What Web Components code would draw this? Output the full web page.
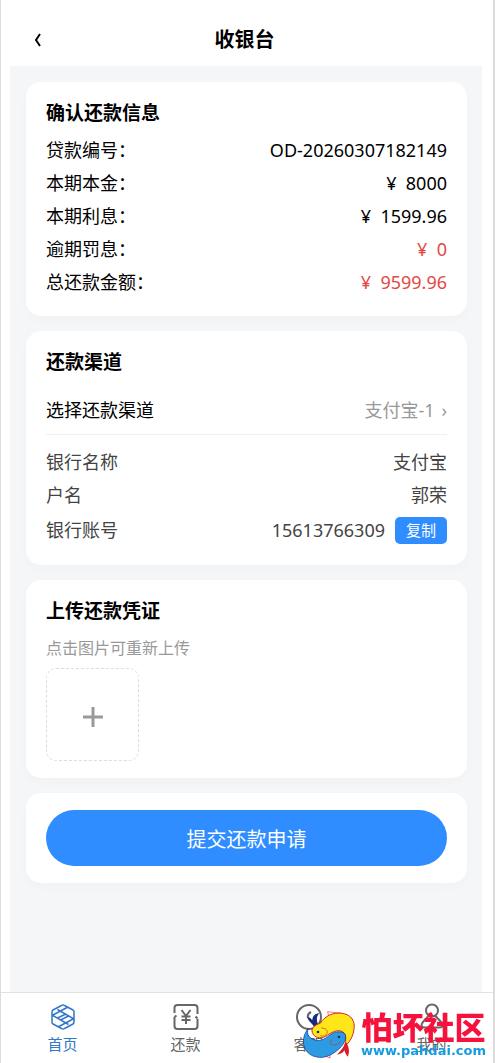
<!DOCTYPE html>
<html lang="zh-CN">
<head>
<meta charset="utf-8">
<meta name="viewport" content="width=device-width, initial-scale=1">
<title>收银台</title>
<style>
  body {
    margin: 0;
    background: #fff;
    color: #000;
    font: 18px/1.5 "Noto Sans", "Noto Sans CJK SC", sans-serif;
    --primary: #2f8dff;
    --danger: #e04a42;
    --muted: #999;
  }
</style>
</head>
<body>
<cashier-page>
  <page-header slot="header">收银台</page-header>

  <info-card heading="确认还款信息">
    <info-row label="贷款编号：">OD-20260307182149</info-row>
    <info-row label="本期本金：">¥&nbsp; 8000</info-row>
    <info-row label="本期利息：">¥&nbsp; 1599.96</info-row>
    <info-row label="逾期罚息：" danger>¥&nbsp; 0</info-row>
    <info-row label="总还款金额：" danger>¥&nbsp; 9599.96</info-row>
  </info-card>

  <info-card heading="还款渠道">
    <channel-picker label="选择还款渠道" value="支付宝-1"></channel-picker>
    <info-row label="银行名称" soft>支付宝</info-row>
    <info-row label="户名" soft>郭荣</info-row>
    <info-row label="银行账号" soft action>15613766309<copy-button slot="action" value="15613766309">复制</copy-button></info-row>
  </info-card>

  <info-card heading="上传还款凭证">
    <upload-box hint="点击图片可重新上传"></upload-box>
  </info-card>

  <info-card>
    <submit-button>提交还款申请</submit-button>
  </info-card>

  <tab-bar slot="footer">
    <tab-item icon="home" active>首页</tab-item>
    <tab-item icon="repay">还款</tab-item>
    <tab-item icon="service">客服</tab-item>
    <tab-item icon="mine">我的</tab-item>
  </tab-bar>
  <site-mark slot="mark"></site-mark>
</cashier-page>

<script>
class BaseElement extends HTMLElement {
  constructor() {
    super();
    this.attachShadow({ mode: 'open' });
  }

  connectedCallback() {
    this.shadowRoot.innerHTML = this.render();
  }
}

class CashierPage extends BaseElement {
  render() {
    return `
      <style>
        :host {
          display: flex;
          flex-direction: column;
          box-sizing: border-box;
          min-height: 100vh;
          border-left: 1px solid #dcdcde;
          border-right: 2px solid #dcdcde;
        }
        main {
          flex: 1;
          display: flex;
          flex-direction: column;
          gap: 15px;
          margin: 0 11px 0 9px;
          padding: 16px 15px 16px 16px;
          background: #f5f6f8;
        }
      </style>
      <slot name="header"></slot>
      <main><slot></slot></main>
      <slot name="footer"></slot>
      <slot name="mark"></slot>
    `;
  }
}

class PageHeader extends BaseElement {
  render() {
    return `
      <style>
        :host { display: block; }
        header {
          display: grid;
          grid-template-columns: 48px 1fr 48px;
          align-items: center;
          padding: 14px 18px 0 13px;
          height: 52px;
        }
        button {
          width: 48px;
          height: 48px;
          border: 0;
          padding: 0;
          background: none;
          display: grid;
          place-items: center;
        }
        h1 {
          margin: 0;
          font-size: 20px;
          line-height: 28px;
          font-weight: 700;
          text-align: center;
        }
      </style>
      <header>
        <button type="button" aria-label="返回">
          <svg width="8" height="14" viewBox="0 0 8 14" fill="none" stroke="#000" stroke-width="2"><path d="M6 1 2 7l4 6"/></svg>
        </button>
        <h1><slot></slot></h1>
      </header>
    `;
  }
}

class InfoCard extends BaseElement {
  render() {
    const heading = this.getAttribute('heading');
    return `
      <style>
        :host {
          display: block;
          padding: 17px 20px;
          border-radius: 15px;
          background: #fff;
          box-shadow: 0 4px 12px rgba(0, 0, 0, 0.02);
        }
        h2 {
          margin: 0 0 7px;
          font-size: 19px;
          line-height: 28px;
          font-weight: 700;
        }
      </style>
      ${heading ? `<h2>${heading}</h2>` : ''}
      <slot></slot>
    `;
  }
}

class InfoRow extends BaseElement {
  render() {
    return `
      <style>
        :host {
          display: flex;
          align-items: center;
          justify-content: space-between;
          min-height: 33px;
          line-height: 27px;
        }
        :host([soft]) { color: #444; }
        :host([action]) { min-height: 36px; }
        :host([danger]) .value { color: var(--danger); }
        .value {
          display: flex;
          align-items: center;
          gap: 10px;
        }
      </style>
      <span>${this.getAttribute('label')}</span>
      <span class="value"><span><slot></slot></span><slot name="action"></slot></span>
    `;
  }
}

class ChannelPicker extends BaseElement {
  render() {
    return `
      <style>
        :host {
          display: flex;
          align-items: center;
          justify-content: space-between;
          height: 48px;
          margin: 10px 0 11px;
          border-bottom: 1px solid #f0f0f0;
        }
        .field {
          display: flex;
          align-items: center;
          gap: 6px;
          color: var(--muted);
        }
        select {
          appearance: none;
          border: 0;
          padding: 0;
          background: none;
          color: inherit;
          font: inherit;
        }
      </style>
      <label for="channel">${this.getAttribute('label')}</label>
      <span class="field">
        <select id="channel"><option>${this.getAttribute('value')}</option></select>
        <span aria-hidden="true">›</span>
      </span>
    `;
  }
}

class CopyButton extends BaseElement {
  connectedCallback() {
    super.connectedCallback();
    this.shadowRoot.querySelector('button').addEventListener('click', () => {
      navigator.clipboard?.writeText(this.getAttribute('value'));
    });
  }

  render() {
    return `
      <style>
        :host { display: flex; }
        button {
          border: 0;
          border-radius: 5px;
          padding: 0 11px;
          background: var(--primary);
          color: #fff;
          font: inherit;
          font-size: 15px;
          line-height: 27px;
        }
      </style>
      <button type="button"><slot></slot></button>
    `;
  }
}

class UploadBox extends BaseElement {
  render() {
    return `
      <style>
        :host { display: block; }
        p {
          margin: 0 0 4px;
          color: var(--muted);
          font-size: 16px;
          line-height: 32px;
        }
        label {
          display: grid;
          place-items: center;
          box-sizing: border-box;
          width: 93px;
          height: 93px;
          padding-top: 4px;
          border: 1px dashed #ddd;
          border-radius: 10px;
        }
        input {
          position: absolute;
          width: 1px;
          height: 1px;
          opacity: 0;
        }
      </style>
      <p id="hint">${this.getAttribute('hint')}</p>
      <label for="file">
        <svg width="22" height="22" viewBox="0 0 22 22" stroke="#999" stroke-width="3" aria-hidden="true"><path d="M1 11h20M11 1v20"/></svg>
        <input id="file" type="file" accept="image/*" aria-labelledby="hint">
      </label>
    `;
  }
}

class SubmitButton extends BaseElement {
  render() {
    return `
      <style>
        :host { display: block; }
        button {
          display: block;
          width: 100%;
          border: 0;
          border-radius: 28px;
          padding: 4px 0 0;
          background: var(--primary);
          color: #fff;
          font: inherit;
          font-size: 20px;
          line-height: 52px;
        }
      </style>
      <button type="button"><slot></slot></button>
    `;
  }
}

class TabBar extends BaseElement {
  render() {
    return `
      <style>
        :host { display: block; }
        nav {
          display: grid;
          grid-template-columns: repeat(4, 1fr);
          border-top: 1px solid #e2e2e4;
          background: #fff;
        }
      </style>
      <nav><slot></slot></nav>
    `;
  }
}

const ICONS = {
  home: '<path d="M12.500 2.500q1.500-1 3 0L24 7q1 .5 1 2v10q0 1.500-1 2l-8.500 4.500q-1.500 1-3 0L4 21q-1-.5-1-2V9q0-1.500 1-2zM3 12.500 19 4M3 12 19.500 21.500M25 15.500 9 24M25 16 8.500 6.500M8.500 15l8.500-4M11.500 17l8-4"/>',
  repay: '<path d="M2.500 10V5a3 3 0 0 1 3-3h17a3 3 0 0 1 3 3v6M2.500 14v9a3 3 0 0 0 3 3h17a3 3 0 0 0 3-3v-7M2.500 14l2-1.500M25.500 15.500l-2-2M9.500 7l4.500 6 4.500-6M14 13v8M9.500 13.500h9M9.500 17h9"/>',
  service: '<circle cx="14" cy="14" r="12"/><path d="M16 9q-4 2-3 6"/>',
  mine: '<circle cx="14" cy="7.500" r="6"/><path d="M10.500 13C8 16 4 18.500 3.500 22c0 2 1 2.500 3 2.500h15c2 0 3-.5 3-2.500-.5-3.500-4.500-6-7-9"/>'
};

class TabItem extends BaseElement {
  render() {
    return `
      <style>
        :host { display: block; }
        :host([active]) a { color: #3277c8; }
        :host([active]) svg { stroke-width: 1.5; }
        a {
          display: flex;
          flex-direction: column;
          align-items: center;
          gap: 2px;
          padding: 10px 0 8px;
          color: #666;
          font-size: 15px;
          line-height: 22px;
          text-decoration: none;
        }
        svg {
          display: block;
          stroke-width: 2;
        }
      </style>
      <a href="#${this.getAttribute('icon')}">
        <svg width="28" height="28" viewBox="0 0 28 28" fill="none" stroke="currentColor" stroke-linejoin="round" aria-hidden="true">${ICONS[this.getAttribute('icon')]}</svg>
        <span><slot></slot></span>
      </a>
    `;
  }
}

// Community mark, floats over the right end of the tab bar
class SiteMark extends BaseElement {
  render() {
    return `
      <style>
        :host {
          position: fixed;
          right: 9px;
          bottom: 3px;
          display: flex;
          align-items: center;
          gap: 4px;
          pointer-events: none;
        }
        .text {
          display: flex;
          flex-direction: column;
          align-items: center;
        }
        strong {
          color: #f5123d;
          font: 900 31px/34px "Noto Sans CJK SC", sans-serif;
        }
        span {
          color: #169be0;
          font: 700 13px/16px "DejaVu Sans", sans-serif;
        }
        svg { display: block; }
      </style>
      <svg width="60" height="52" viewBox="45 80 180 156" aria-hidden="true">
        <path d="M137 91c18 3 35 3 48 6l-44 13zM124 222l20 8v-17" fill="#fff" stroke="#e8304a" stroke-width="2"/>
        <path d="M97 139C91 125 79 121 76 108c8-1 11 5 15 9 0-9 5-20 21-22-8 9-10 20-3 36z" fill="#172a80"/>
        <path d="M91 153c-5-13 9-23 24-27 13-22 38-34 66-30 28 4 39 25 35 48-3 22-13 39-28 51 5-20 5-36-5-43-17-11-36 3-52 13-16 8-35 5-40-12z" fill="#ffe619" stroke="#d6252c" stroke-width="3"/>
        <path d="M79 141c-15 18-20 44-9 63 13 24 48 31 75 17 25-13 47-35 46-56-1-13-20-17-35-11-20 9-31 27-53 23-21-4-31-18-24-36z" fill="#2c9be4" stroke="#172a80" stroke-width="2"/>
        <path d="M190 184c-5 14-14 23-25 36 10-2 18-5 22-13 3 7 4 13 10 19 6-12 5-25-3-42z" fill="#d91d2b"/>
        <path d="M117 140c14 0 21 6 18 16-3 8-12 10-20 7M151 174c-10 5-7 18 5 17 9 0 15-4 18-10" fill="none" stroke="#bc3b28" stroke-width="2"/>
        <circle cx="108" cy="152" r="4" fill="#172a80"/>
        <circle cx="171" cy="167" r="4" fill="#172a80"/>
      </svg>
      <div class="text"><strong>怕坏社区</strong><span>www.pahdai.com</span></div>
    `;
  }
}

customElements.define('cashier-page', CashierPage);
customElements.define('page-header', PageHeader);
customElements.define('info-card', InfoCard);
customElements.define('info-row', InfoRow);
customElements.define('channel-picker', ChannelPicker);
customElements.define('copy-button', CopyButton);
customElements.define('upload-box', UploadBox);
customElements.define('submit-button', SubmitButton);
customElements.define('tab-bar', TabBar);
customElements.define('tab-item', TabItem);
customElements.define('site-mark', SiteMark);
</script>
</body>
</html>
